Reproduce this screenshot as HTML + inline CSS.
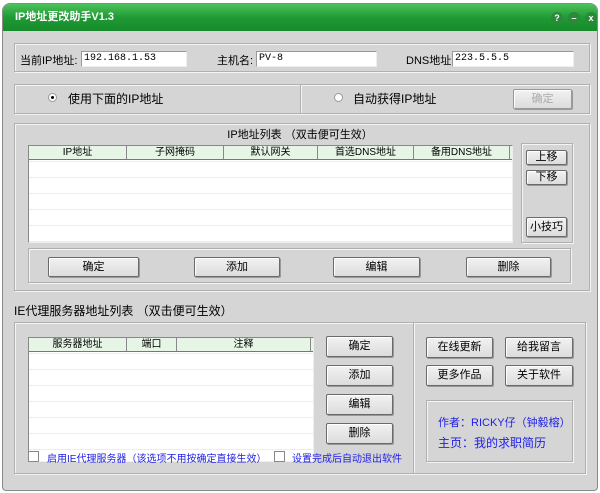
<!DOCTYPE html>
<html><head><meta charset="utf-8"><style>
*{margin:0;padding:0;box-sizing:border-box}
body{width:600px;height:493px;background:#fff;font-family:"Liberation Sans","Noto Sans CJK SC","WenQuanYi Zen Hei",sans-serif;font-size:11px;color:#000;position:relative;overflow:hidden}
.a{position:absolute;white-space:nowrap}
.win{left:2px;top:3px;width:596px;height:488px;background:#d5d5d5;border:1px solid #8a8a8a;border-radius:8px 8px 4px 4px;overflow:hidden}
.title{left:0;top:0;width:596px;height:27px;background:linear-gradient(#4cc25c,#1f9a34 50%,#188a2c);color:#fff;font-weight:bold;font-size:11px;line-height:27px;padding-left:12px}
.grp{border:1px solid #b0b0b0;box-shadow:inset 1px 1px 0 #f4f4f4,1px 1px 0 #f4f4f4}
.inp{background:#fff;border:1px solid #999;border-right-color:#eee;border-bottom-color:#eee;font-size:10px;line-height:14px;padding-left:2px;font-family:"Liberation Mono","Noto Sans CJK SC",monospace}
.btn{background:linear-gradient(#f2f2f2,#dcdcdc);border:1px solid #6a6a6a;border-radius:2px;text-align:center;box-shadow:inset 1px 1px 0 #fff,1px 1px 0 #999;font-size:11px}
.lst{background:#fff;border:1px solid #888;border-right-color:#eee;border-bottom-color:#eee;background-image:repeating-linear-gradient(#fff 0 15px,#e6f2e6 15px 16px)}
.hd{background:#e6f5e6;border-bottom:1px solid #777;height:14px;display:flex;font-size:10px;line-height:13px}
.hd div{border-right:1px solid #888;text-align:center}
.blue{color:#1e1ee6}
.cb{width:11px;height:11px;background:#fff;border:1px solid #888}
.rd{width:9px;height:9px;border-radius:50%;background:#fff;border:1px solid #999}
</style></head><body>
<div class="a win">
<div class="a title">IP地址更改助手V1.3</div>
<div class="a" style="left:548px;top:8px;width:12px;height:12px;border-radius:50%;background:#2a8a3a;color:#fff;font-size:9px;line-height:12px;text-align:center;font-weight:bold">?</div>
<div class="a" style="left:565px;top:8px;width:12px;height:12px;border-radius:50%;background:#2a8a3a;color:#fff;font-size:9px;line-height:12px;text-align:center;font-weight:bold">–</div>
<div class="a" style="left:582px;top:8px;width:12px;height:12px;border-radius:50%;background:#2a8a3a;color:#fff;font-size:9px;line-height:12px;text-align:center;font-weight:bold">x</div>
</div>
<div class="a grp" style="left:14px;top:43px;width:576px;height:29px"></div>
<div class="a" style="left:20px;top:52px">当前IP地址:</div>
<div class="a inp" style="left:81px;top:51px;width:106px;height:16px">192.168.1.53</div>
<div class="a" style="left:217px;top:52px">主机名:</div>
<div class="a inp" style="left:256px;top:51px;width:121px;height:16px">PV-8</div>
<div class="a" style="left:406px;top:52px">DNS地址:</div>
<div class="a inp" style="left:452px;top:51px;width:122px;height:16px">223.5.5.5</div>
<div class="a grp" style="left:14px;top:84px;width:576px;height:30px"></div>
<div class="a" style="left:300px;top:85px;width:1px;height:28px;background:#b0b0b0;box-shadow:1px 0 0 #f4f4f4"></div>
<div class="a rd" style="left:48px;top:93px"><div style="margin:2px;width:3px;height:3px;background:#000;border-radius:50%"></div></div>
<div class="a" style="left:68px;top:90px;font-size:12px">使用下面的IP地址</div>
<div class="a rd" style="left:334px;top:93px"></div>
<div class="a" style="left:353px;top:90px;font-size:12px">自动获得IP地址</div>
<div class="a btn" style="left:513px;top:89px;width:59px;height:20px;color:#aaa;line-height:18px;border-color:#999">确定</div>
<div class="a grp" style="left:14px;top:123px;width:576px;height:168px"></div>
<div class="a" style="left:0;width:600px;top:126px;text-align:center">IP地址列表 （双击便可生效）</div>
<div class="a lst" style="left:28px;top:145px;width:485px;height:98px"></div>
<div class="a hd" style="left:29px;top:146px;width:483px"><div style="width:98px">IP地址</div><div style="width:97px">子网掩码</div><div style="width:94px">默认网关</div><div style="width:96px">首选DNS地址</div><div style="width:96px">备用DNS地址</div></div>
<div class="a grp" style="left:521px;top:143px;width:52px;height:100px"></div>
<div class="a btn" style="left:526px;top:150px;width:41px;height:15px;line-height:13px">上移</div>
<div class="a btn" style="left:526px;top:170px;width:41px;height:15px;line-height:13px">下移</div>
<div class="a btn" style="left:526px;top:217px;width:41px;height:20px;line-height:18px">小技巧</div>
<div class="a grp" style="left:28px;top:248px;width:543px;height:35px"></div>
<div class="a btn" style="left:48px;top:257px;width:91px;height:20px;line-height:18px">确定</div>
<div class="a btn" style="left:194px;top:257px;width:86px;height:20px;line-height:18px">添加</div>
<div class="a btn" style="left:333px;top:257px;width:87px;height:20px;line-height:18px">编辑</div>
<div class="a btn" style="left:466px;top:257px;width:85px;height:20px;line-height:18px">删除</div>
<div class="a" style="left:14px;top:302px;font-size:12px">IE代理服务器地址列表 （双击便可生效）</div>
<div class="a grp" style="left:14px;top:322px;width:572px;height:152px"></div>
<div class="a" style="left:413px;top:323px;width:1px;height:150px;background:#b0b0b0;box-shadow:1px 0 0 #f4f4f4"></div>
<div class="a lst" style="left:28px;top:337px;width:286px;height:125px"></div>
<div class="a hd" style="left:29px;top:338px;width:284px"><div style="width:98px">服务器地址</div><div style="width:50px">端口</div><div style="width:134px">注释</div></div>
<div class="a btn" style="left:326px;top:336px;width:67px;height:21px;line-height:19px">确定</div>
<div class="a btn" style="left:326px;top:365px;width:67px;height:21px;line-height:19px">添加</div>
<div class="a btn" style="left:326px;top:394px;width:67px;height:21px;line-height:19px">编辑</div>
<div class="a btn" style="left:326px;top:423px;width:67px;height:21px;line-height:19px">删除</div>
<div class="a cb" style="left:28px;top:451px"></div>
<div class="a blue" style="left:47px;top:450px;font-size:10px">启用IE代理服务器（该选项不用按确定直接生效）</div>
<div class="a cb" style="left:274px;top:451px"></div>
<div class="a blue" style="left:292px;top:450px;font-size:10px">设置完成后自动退出软件</div>
<div class="a btn" style="left:426px;top:337px;width:67px;height:21px;line-height:19px">在线更新</div>
<div class="a btn" style="left:505px;top:337px;width:68px;height:21px;line-height:19px">给我留言</div>
<div class="a btn" style="left:426px;top:365px;width:67px;height:21px;line-height:19px">更多作品</div>
<div class="a btn" style="left:505px;top:365px;width:68px;height:21px;line-height:19px">关于软件</div>
<div class="a grp" style="left:426px;top:400px;width:147px;height:62px"></div>
<div class="a blue" style="left:438px;top:414px;font-size:11px">作者：RICKY仔（钟毅榕）</div>
<div class="a blue" style="left:438px;top:434px;font-size:12px">主页：我的求职简历</div>
</body></html>
